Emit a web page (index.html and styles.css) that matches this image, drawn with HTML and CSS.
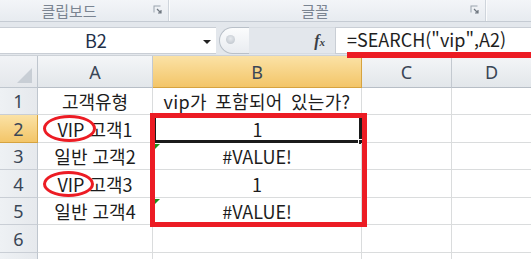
FILE: index.html
```html
<!DOCTYPE html>
<html lang="ko">
<head>
<meta charset="utf-8">
<link rel="stylesheet" href="styles.css">
</head>
<body>
<div class="app">
  <div class="ribbon">
    <div class="group g1"><span class="glabel">클립보드</span><span class="launcher"><svg width="9" height="9" viewBox="0 0 9 9"><path d="M0.5 0.5h7v1h-6v6h-1z" fill="#9aa3ad"/><path d="M4 4l4 4M5 8h3V5" stroke="#6f7780" stroke-width="1.2" fill="none"/></svg></span></div>
    <div class="group g2"><span class="glabel">글꼴</span><span class="launcher"><svg width="9" height="9" viewBox="0 0 9 9"><path d="M0.5 0.5h7v1h-6v6h-1z" fill="#9aa3ad"/><path d="M4 4l4 4M5 8h3V5" stroke="#6f7780" stroke-width="1.2" fill="none"/></svg></span></div>
    <div class="group g3"></div>
  </div>
  <div class="fbar">
    <div class="namebox"><span class="nb-text">B2</span><span class="nb-arrow"></span></div>
    <div class="grip"><span class="grip-dot"></span></div>
    <div class="fx"><i>f</i><span class="fx-x">x</span></div>
    <div class="finput"><span class="ftext">=SEARCH("vip",A2)</span><span class="uline"></span></div>
  </div>
  <div class="sheet">
    <div class="corner"><span class="tri"></span></div>
    <div class="ch">A</div>
    <div class="ch sel">B</div>
    <div class="ch">C</div>
    <div class="ch last">D</div>

    <div class="rh">1</div>
    <div class="c">고객유형</div>
    <div class="c wide">vip가 포함되어 있는가?</div>
    <div class="c"></div>
    <div class="c last"></div>

    <div class="rh sel">2</div>
    <div class="c">VIP 고객1</div>
    <div class="c active">1<span class="handle"></span></div>
    <div class="c"></div>
    <div class="c last"></div>

    <div class="rh">3</div>
    <div class="c">일반 고객2</div>
    <div class="c err">#VALUE!</div>
    <div class="c"></div>
    <div class="c last"></div>

    <div class="rh">4</div>
    <div class="c">VIP 고객3</div>
    <div class="c">1</div>
    <div class="c"></div>
    <div class="c last"></div>

    <div class="rh">5</div>
    <div class="c">일반 고객4</div>
    <div class="c err">#VALUE!</div>
    <div class="c"></div>
    <div class="c last"></div>

    <div class="rh">6</div>
    <div class="c"></div>
    <div class="c"></div>
    <div class="c"></div>
    <div class="c last"></div>

    <div class="rh"></div>
    <div class="c"></div>
    <div class="c"></div>
    <div class="c"></div>
    <div class="c last"></div>
  </div>
  <span class="ring ring1"></span>
  <span class="ring ring2"></span>
  <span class="redbox"></span>
</div>
</body>
</html>
```
FILE: styles.css
```css
* { box-sizing: border-box; }
html, body { margin: 0; padding: 0; }
body {
  width: 531px; height: 259px; overflow: hidden;
  background: #e3e7ec;
  font-family: "Noto Sans CJK KR", "Noto Sans", sans-serif;
}
.app { position: relative; width: 531px; height: 259px; overflow: hidden; }

.ribbon {
  display: flex; height: 22px;
  background: linear-gradient(#f3f5f8, #e7ebf0);
  border-bottom: 1px solid #c5cbd3;
}
.group {
  position: relative; display: flex; align-items: center; justify-content: center;
  border-right: 1px solid #cfd5dc;
  box-shadow: 1px 0 0 #fbfcfd;
}
.g1 { width: 169px; }
.g2 { width: 317px; }
.g3 { flex: 1; border-right: none; box-shadow: none; }
.glabel { font-size: 15px; color: #7a8491; margin-left: -30px; margin-top: 0; line-height: 20px; }
.g2 .glabel { margin-left: -24px; }
.launcher { position: absolute; right: 6px; top: 5px; width: 9px; height: 9px; display: block; }
.launcher svg { display: block; }

.fbar {
  display: flex; height: 34px;
  padding: 5px 0 1px 0;
  background: #e3e7ec;
  border-bottom: 1px solid #cdd2d8;
}
.namebox {
  width: 216px; background: #fff;
  border-top: 1px solid #c9ced5; border-bottom: 1px solid #c9ced5;
  display: flex; align-items: center; position: relative;
}
.nb-text { position: absolute; left: 85px; font-size: 18px; color: #1e3049; top: -1px; }
.nb-arrow {
  position: absolute; left: 203px; top: 12px;
  width: 0; height: 0;
  border-left: 4px solid transparent; border-right: 4px solid transparent;
  border-top: 4px solid #222;
}
.grip {
  width: 30px; margin-left: 3px; position: relative;
  border: 1px solid #b9c0c8; border-right: none;
  border-radius: 14px 0 0 14px;
  background: linear-gradient(#fbfcfd, #e9ecf0);
}
.grip-dot {
  position: absolute; left: 6px; top: 7px; width: 9px; height: 9px; border-radius: 50%;
  background: radial-gradient(circle at 50% 40%, #e6e9ed, #b9c0c8);
}
.fx {
  width: 86px; display: flex; align-items: center; justify-content: flex-end;
  padding-right: 10px;
  font-family: "Liberation Serif", serif; font-size: 16px; color: #3b3f46;
  border-top: 1px solid #d7dce2; border-bottom: 1px solid #d7dce2;
}
.fx i { font-weight: bold; }
.fx-x { font-style: italic; font-size: 11px; font-weight: bold; margin-top: 3px; }
.finput {
  flex: 1; background: #fff; position: relative;
  border-top: 1px solid #c9ced5; border-bottom: 1px solid #c9ced5; border-left: 1px solid #c9ced5;
  padding-left: 11px; display: flex; align-items: center;
}
.ftext { font-size: 18px; color: #1e1e1e; margin-top: -4px; }
.uline { position: absolute; left: 11px; right: 0; top: 24px; height: 6px; background: #ec1c24; }

.sheet {
  display: grid;
  grid-template-columns: 38px 115px 209px 90px 79px;
  grid-template-rows: 32px 27px 28px 27px 28px 27px 28px 27px;
  background: #fff;
}
.corner {
  background: linear-gradient(#f1f3f6, #e4e7eb);
  border-right: 1px solid #bfc6ce; border-bottom: 1px solid #bfc6ce; position: relative;
}
.tri {
  position: absolute; right: 5px; bottom: 4px; width: 0; height: 0;
  border-left: 15px solid transparent; border-bottom: 15px solid #c8ced5;
}
.ch {
  background: linear-gradient(#f4f6f8, #e2e6ea);
  border-right: 1px solid #c3c9d0; border-bottom: 1px solid #b7bec6;
  display: flex; align-items: center; justify-content: center;
  font-family: "Noto Sans", sans-serif; font-size: 18px; color: #3a4656;
}
.ch.sel { background: linear-gradient(#fbe2a6, #f3c568); border-right-color: #d6a33f; border-bottom-color: #d6a33f; }
.ch.last { border-right: none; }
.rh {
  background: linear-gradient(90deg, #eef1f4, #e6e9ed);
  border-right: 1px solid #bfc6ce; border-bottom: 1px solid #c9ced5;
  display: flex; align-items: center; justify-content: center;
  font-family: "Noto Sans", sans-serif; font-size: 18px; color: #3a4656;
}
.rh.sel { background: linear-gradient(#fbe2a6, #f3c568); border-right-color: #d6a33f; border-bottom-color: #d6a33f; }
.c {
  border-right: 1px solid #dadcdd; border-bottom: 1px solid #dadcdd;
  display: flex; align-items: center; justify-content: center;
  font-size: 18px; color: #1c1c1c; position: relative; white-space: nowrap;
}
.c.wide { word-spacing: 3px; letter-spacing: 0.3px; }
.c.last { border-right: none; }
.c.active { border: 3px solid #1b1b1b; }
.handle {
  position: absolute; right: -5px; bottom: -5px; width: 6px; height: 6px;
  background: #1b1b1b; border: 1px solid #fff;
}
.c.err::before {
  content: ""; position: absolute; left: 1px; top: 1px; width: 0; height: 0;
  border-top: 6px solid #1d8f1d; border-right: 6px solid transparent;
}

.ring {
  position: absolute; border: 3px solid #ec1c24; border-radius: 50%;
}
.ring1 { left: 43px; top: 115px; width: 53px; height: 27px; }
.ring2 { left: 43px; top: 171px; width: 51px; height: 26px; }
.redbox {
  position: absolute; left: 150px; top: 113px; width: 217px; height: 114px;
  border: 5px solid #ec1c24;
}
```
